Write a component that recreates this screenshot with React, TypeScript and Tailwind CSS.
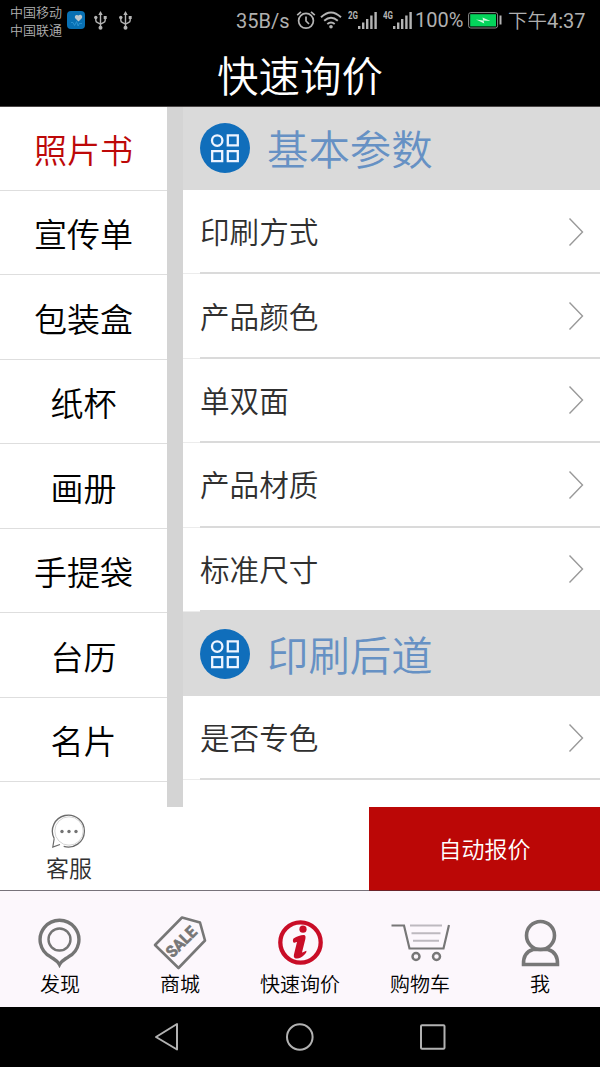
import React from "react";

const categories = ["照片书", "宣传单", "包装盒", "纸杯", "画册", "手提袋", "台历", "名片"];
const basicRows = ["印刷方式", "产品颜色", "单双面", "产品材质", "标准尺寸"];

function UsbIcon() {
  return (
    <svg width="13" height="19" viewBox="0 0 13 19" fill="none" stroke="#b4b4b4" strokeWidth="1.4">
      <path d="M6.5 3v13M1.800 6v3.200q0 1.800 1.800 2.500l2.900 1.500M11.200 6v3.200q0 1.800-1.800 2.500l-2.900 1.500" />
      <path d="M6.5 0l2.200 4H4.300z" fill="#b4b4b4" stroke="none" />
      <circle cx="6.5" cy="16.8" r="2" fill="#b4b4b4" stroke="none" />
      <circle cx="1.8" cy="6.500" r="1.700" fill="#b4b4b4" stroke="none" />
      <path d="M9.700 5h3v3h-3z" fill="#b4b4b4" stroke="none" />
    </svg>
  );
}

function HealthIcon() {
  return (
    <svg width="18" height="18" viewBox="0 0 18 18">
      <rect width="18" height="18" rx="4" fill="#0870b3" />
      <path d="M11.5 10.5L8.2 7.2C6.8 5.200 9.400 2.600 11.500 4.600c2-2 4.800.5 3.300 2.700z" fill="#bcc8ce" />
      <path d="M4 11.500h2l1.600 3 2-4 1.500 4.500 1.200-2.500H15" fill="none" stroke="#3198d6" strokeWidth=".8" />
    </svg>
  );
}

function Signal({ label }: { label: string }) {
  return (
    <svg width="30" height="20" viewBox="0 0 30 20" fill="#b4b4b4">
      <text x="0" y="8.600" fontSize="10.500" fontWeight="700" textLength="10" lengthAdjust="spacingAndGlyphs" fontFamily="Roboto, sans-serif">
        {label}
      </text>
      <path d="M10 16h2.400v3H10zM14 12.500h2.400V19H14zM18 9h2.400v10H18zM22.200 5.500h2.400V19h-2.400zM26.400 2h2.400v17h-2.400z" />
    </svg>
  );
}

function StatusBar() {
  return (
    <div className="flex h-10 items-center text-[#b0b0b0]">
      <div className="ml-[10px] w-[54px] shrink-0 pt-px text-[13px] leading-[18px] font-[350] whitespace-nowrap">
        <div>中国移动</div>
        <div>中国联通</div>
      </div>
      <div className="ml-[3px] flex shrink-0 items-center">
        <HealthIcon />
        <div className="ml-[9px] flex gap-3">
          <UsbIcon />
          <UsbIcon />
        </div>
      </div>
      <div className="ml-[104px] w-[54px] shrink-0 pt-px font-[Roboto] text-[20px] leading-6 whitespace-nowrap">35B/s</div>
      <svg className="ml-[6px] shrink-0" width="20" height="20" viewBox="0 0 20 20" fill="none" stroke="#b4b4b4" strokeWidth="1.700">
        <circle cx="10" cy="10.800" r="7.400" />
        <path d="M10 6.500v4.500l3 3M1.200 5.200L5 1.800M18.800 5.200L15 1.800" />
      </svg>
      <svg className="ml-[4px] shrink-0" width="22" height="18" viewBox="0 0 22 18" fill="none" stroke="#b4b4b4" strokeWidth="1.900">
        <path d="M1 6.300Q11-3.500 21 6.300M4.200 9.800q6.800-6.200 13.600 0M7.300 13q3.700-3.200 7.400 0" />
        <circle cx="11" cy="15.700" r="1.800" fill="#b4b4b4" stroke="none" />
      </svg>
      <div className="ml-[6px] flex shrink-0 gap-[5px]">
        <Signal label="2G" />
        <Signal label="4G" />
      </div>
      <div className="ml-[2px] w-[48px] shrink-0 font-[Roboto] text-[20px] leading-6 whitespace-nowrap">100%</div>
      <svg className="ml-[5px] shrink-0" width="34" height="17" viewBox="0 0 34 17">
        <rect x=".6" y=".6" width="29" height="15.400" rx="2.200" fill="none" stroke="#8e8e8e" />
        <rect x="2.200" y="2.200" width="25.800" height="12.200" fill="#04d45b" />
        <path d="M8 7.600l7.200.8-.7-3L22.500 9l-7-.5.8 3z" fill="#d5f7e2" />
        <path d="M31.500 3.500h2v9h-2z" fill="#b4b4b4" />
      </svg>
      <div className="ml-[6px] flex shrink-0 items-center text-[19.5px] leading-6 whitespace-nowrap">
        <span className="font-[350]">下午</span>
        <span className="pt-px font-[Roboto] text-[20px]">4:37</span>
      </div>
    </div>
  );
}

function SectionHead({ title }: { title: string }) {
  return (
    <div className="flex h-[84px] shrink-0 items-center bg-[#dadada] pl-[17px]">
      <svg width="50" height="50" viewBox="0 0 50 50" fill="none" stroke="#edf4ff" strokeWidth="2.300">
        <circle cx="25" cy="25" r="25" fill="#106ebb" stroke="none" />
        <circle cx="17.200" cy="17.600" r="5.200" />
        <path d="M27.800 12.400h10v10h-10zM12.200 28.200h10v10h-10zM27.800 28.200h10v10h-10z" />
      </svg>
      <h2 className="ml-[17px] pb-[2px] text-[41.4px] leading-[60px] font-[350] text-[#6691c4]">{title}</h2>
    </div>
  );
}

function ParamRow({ label }: { label: string }) {
  return (
    <div className="flex h-[84.4px] shrink-0 flex-col border-b border-[#ececec]">
      <div className="-mb-px ml-[17px] flex flex-1 items-center justify-between border-b-2 border-[#dadada] pr-[16px]">
        <span className="text-[29.6px] leading-10 font-[350] text-[#303030]">{label}</span>
        <svg className="mt-px" width="16" height="30" viewBox="0 0 16 30" fill="none" stroke="#999" strokeWidth="1.400">
          <path d="M1.500 1.500L14.500 15 1.500 28.500" />
        </svg>
      </div>
    </div>
  );
}

function Tab({ label, children }: { label: string; children: React.ReactNode }) {
  return (
    <div className="flex w-[120px] flex-col items-center pt-[25px]">
      <div className="flex h-[54px] items-center justify-center">{children}</div>
      <span className="text-[20px] leading-7 font-[350] text-black">{label}</span>
    </div>
  );
}

export default function App() {
  return (
    <div className="flex h-[1067px] w-[600px] flex-col overflow-hidden bg-white font-['Noto_Sans_CJK_SC',sans-serif]">
      <header className="h-[106px] shrink-0 bg-black">
        <StatusBar />
        <h1 className="pt-[4px] text-center text-[41.5px] leading-[60px] font-[350] text-white">快速询价</h1>
      </header>

      <main className="flex h-[701px] shrink-0 overflow-hidden border-t border-[#4a4646]">
        <nav className="-mt-px w-[167px] shrink-0 pt-px">
          {categories.map((name, i) => (
            <div
              key={name}
              className={
                "flex items-center justify-center border-b border-[#dedede] text-[33px] leading-10 font-[350] " +
                (i === 0 ? "h-[83.5px] pt-px text-[#bd0808]" : "h-[84.5px] pt-[2px] text-black")
              }
            >
              {name}
            </div>
          ))}
        </nav>
        <div className="w-4 shrink-0 bg-[#d4d4d4]" />
        <div className="-mt-px flex flex-1 flex-col [clip-path:inset(1px_0_0_0)]">
          <SectionHead title="基本参数" />
          {basicRows.map((r) => (
            <ParamRow key={r} label={r} />
          ))}
          <SectionHead title="印刷后道" />
          <ParamRow label="是否专色" />
        </div>
      </main>

      <div className="flex h-[84px] shrink-0 justify-between border-b border-[#77727a]">
        <div className="flex w-[138px] flex-col items-center pt-[7px]">
          <svg width="36" height="35" viewBox="0 0 36 35" fill="none" stroke="#6b6b6b">
            <path d="M3.200 24.500A16 16 0 1 1 12.700 32.400" strokeWidth="1.300" />
            <path d="M3.200 24.500L1.800 33l7.200-2.500" strokeWidth="1.200" />
            <circle cx="18" cy="17" r="14.200" stroke="#c9c9c9" strokeWidth=".8" />
            <g fill="#737373" stroke="none">
              <circle cx="11" cy="17.500" r="1.700" />
              <circle cx="18" cy="17.500" r="1.700" />
              <circle cx="25" cy="17.500" r="1.700" />
            </g>
          </svg>
          <span className="mt-[2px] text-[23px] leading-[32px] font-[350] text-[#303030]">客服</span>
        </div>
        <button className="-mb-px w-[231px] border-b border-[#6c2229] bg-[#bb0706] text-[23px] font-[350] text-white">自动报价</button>
      </div>

      <footer className="flex h-[116px] shrink-0 bg-[#fcf7fc]">
        <Tab label="发现">
          <svg width="44" height="50" viewBox="0 0 44 50" fill="none" stroke="#747474">
            <path d="M21.500 46.500c-2-4-5-5-9-7.700A19.400 19.400 0 1 1 30.500 38.800c-4 2.700-7 3.700-9 7.700z" strokeWidth="3.400" />
            <circle cx="21.500" cy="21.500" r="11" strokeWidth="2.400" />
          </svg>
        </Tab>
        <Tab label="商城">
          <svg width="54" height="54" viewBox="0 0 54 54" fill="none" stroke="#777" strokeWidth="2.600">
            <path d="M2 29L29 1.500 47 6.500l5 18L25.500 52z" strokeLinejoin="round" />
            <text transform="translate(19.500 42.500) rotate(-45)" fill="#777" stroke="#777" strokeWidth=".7" fontSize="16" fontWeight="700" fontFamily="Roboto, sans-serif" textLength="36" lengthAdjust="spacingAndGlyphs">
              SALE
            </text>
          </svg>
        </Tab>
        <Tab label="快速询价">
          <svg width="46" height="46" viewBox="0 0 46 46" fill="#c90d27">
            <circle cx="23.500" cy="22.500" r="20.200" fill="none" stroke="#c90d27" strokeWidth="4.300" />
            <circle cx="26" cy="9.200" r="3.600" />
            <path d="M16.500 18.500c3.500-2 7-3.500 10.200-3.500 2 0 2.100 2 1.600 4.300L25 32.500c1.500 0 2.700-1.200 4.200-1.700.8 1-.3 2.500-1.600 3.700-2.800 2.800-5.700 4.500-8.700 4-2.500-.5-2.300-2.700-1.700-5L20 22c-1.400-.2-2.200.9-3.200.8-1-.8-1.300-2.800-.3-4.300z" />
          </svg>
        </Tab>
        <Tab label="购物车">
          <svg width="60" height="40" viewBox="0 0 60 40" fill="none" stroke="#777" strokeWidth="2.200">
            <path d="M1.500 2.500H14l5.500 23h34L59 2" />
            <path d="M20 2.500h32M21.500 10.200h29M23 17.800h26" stroke="#bdb9bf" strokeWidth="1.900" />
            <circle cx="26" cy="33.500" r="3.500" strokeWidth="2.500" />
            <circle cx="46.500" cy="33.500" r="3.500" strokeWidth="2.500" />
          </svg>
        </Tab>
        <Tab label="我">
          <svg width="40" height="48" viewBox="0 0 40 48" fill="none" stroke="#777" strokeWidth="3.600">
            <circle cx="20.500" cy="16.500" r="14" />
            <path d="M13 30.500h15q10 3 9.500 15h-34Q3 33.500 13 30.500z" />
          </svg>
        </Tab>
      </footer>

      <div className="flex h-[60px] shrink-0 items-center justify-between bg-black pr-[154px] pl-[153px]">
        <svg width="26" height="30" viewBox="0 0 26 30" fill="none" stroke="#b2b2b2" strokeWidth="2" strokeLinejoin="round">
          <path d="M24 2v25.500L3 15z" />
        </svg>
        <svg className="ml-[2px]" width="30" height="30" viewBox="0 0 30 30" fill="none" stroke="#b2b2b2" strokeWidth="2">
          <circle cx="14.800" cy="15" r="12.800" />
        </svg>
        <svg width="27" height="30" viewBox="0 0 27 30" fill="none" stroke="#b2b2b2" strokeWidth="2">
          <rect x="2" y="3.200" width="23.500" height="23.500" rx="1" />
        </svg>
      </div>
    </div>
  );
}
